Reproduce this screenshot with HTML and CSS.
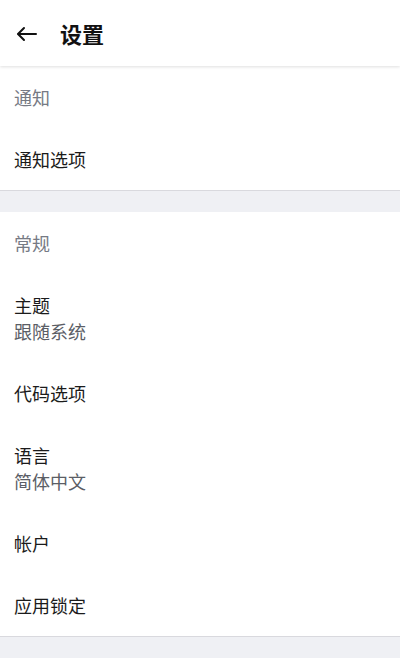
FILE: index.html
```html
<!DOCTYPE html>
<html lang="zh">
<head>
<meta charset="utf-8">
<title>设置</title>
<link rel="stylesheet" href="styles.css">
</head>
<body>
<div class="app">
  <header class="topbar">
    <span class="back">
      <svg width="22" height="16" viewBox="0 0 22 16" fill="none" stroke="#111" stroke-width="2" stroke-linecap="round" stroke-linejoin="round">
        <path d="M20 8H2.5"/>
        <path d="M8 2L2 8l6 6"/>
      </svg>
    </span>
    <h1 class="title">设置</h1>
  </header>
  <section class="group">
    <div class="label">通知</div>
    <div class="item"><div class="primary">通知选项</div></div>
  </section>
  <div class="gap"></div>
  <section class="group">
    <div class="label">常规</div>
    <div class="item"><div class="primary">主题</div><div class="secondary">跟随系统</div></div>
    <div class="item"><div class="primary">代码选项</div></div>
    <div class="item"><div class="primary">语言</div><div class="secondary">简体中文</div></div>
    <div class="item"><div class="primary">帐户</div></div>
    <div class="item"><div class="primary">应用锁定</div></div>
  </section>
  <div class="gap gap-end"></div>
</div>
</body>
</html>
```
FILE: styles.css
```css
html, body {
  margin: 0;
  padding: 0;
  background: #eff0f4;
}
body {
  font-family: "Noto Sans CJK SC", "Noto Sans", sans-serif;
  color: #1b1b1b;
}
.app {
  width: 400px;
  min-height: 658px;
  background: #eff0f4;
}
.topbar {
  height: 66px;
  background: #fff;
  display: flex;
  align-items: center;
  padding-left: 16px;
  box-shadow: 0 1px 3px rgba(0,0,0,0.13);
  position: relative;
  z-index: 1;
  box-sizing: border-box;
}
.back {
  display: flex;
  width: 44px;
  align-items: center;
  margin-top: 2px;
}
.title {
  margin: 0;
  font-size: 22px;
  font-weight: 700;
  line-height: 28px;
  color: #111;
}
.group {
  background: #fff;
  border-bottom: 1px solid #d9d9de;
}
.label {
  height: 62px;
  display: flex;
  align-items: center;
  padding-left: 14px;
  font-size: 18px;
  color: #767a84;
}
.item {
  padding: 18px 14px;
  display: flex;
  flex-direction: column;
}
.primary, .secondary {
  font-size: 18px;
  line-height: 26px;
}
.primary { color: #1b1b1b; }
.secondary { color: #5b5e66; }
.gap {
  height: 21px;
}
```
